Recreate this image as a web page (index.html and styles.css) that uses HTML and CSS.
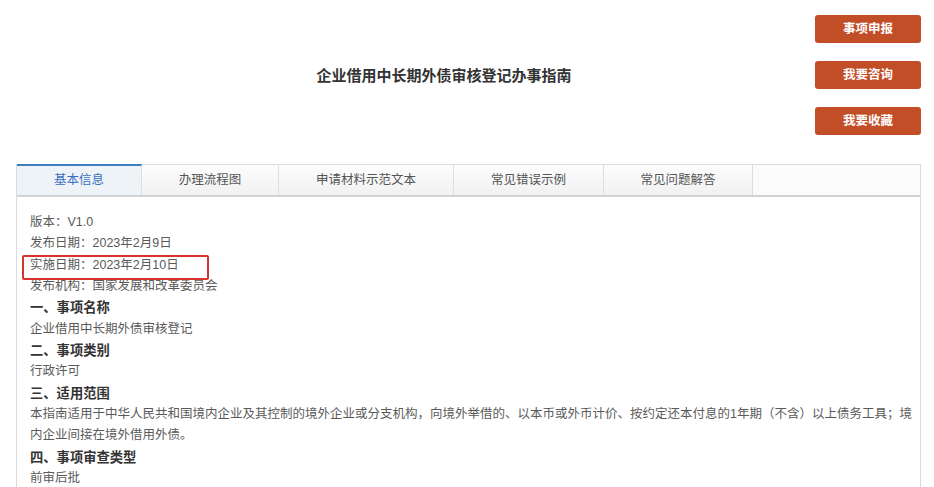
FILE: index.html
```html
<!DOCTYPE html>
<html lang="zh-CN">
<head>
<meta charset="utf-8">
<title>企业借用中长期外债审核登记办事指南</title>
<link rel="stylesheet" href="styles.css">
</head>
<body>
<div class="page">
  <header class="header">
    <h1 class="title">企业借用中长期外债审核登记办事指南</h1>
    <div class="actions">
      <a class="btn">事项申报</a>
      <a class="btn">我要咨询</a>
      <a class="btn">我要收藏</a>
    </div>
  </header>
  <section class="panel">
    <nav class="tabs">
      <div class="tab active t1">基本信息</div>
      <div class="tab t2">办理流程图</div>
      <div class="tab t3">申请材料示范文本</div>
      <div class="tab t4">常见错误示例</div>
      <div class="tab t5">常见问题解答</div>
      <div class="tab-rest"></div>
    </nav>
    <div class="content">
      <p class="line">版本：V1.0</p>
      <p class="line">发布日期：2023年2月9日</p>
      <p class="line marked">实施日期：2023年2月10日</p>
      <p class="line">发布机构：国家发展和改革委员会</p>
      <h2 class="heading">一、事项名称</h2>
      <p class="line">企业借用中长期外债审核登记</p>
      <h2 class="heading">二、事项类别</h2>
      <p class="line">行政许可</p>
      <h2 class="heading">三、适用范围</h2>
      <p class="line">本指南适用于中华人民共和国境内企业及其控制的境外企业或分支机构，向境外举借的、以本币或外币计价、按约定还本付息的1年期（不含）以上债务工具；境<br>内企业间接在境外借用外债。</p>
      <h2 class="heading">四、事项审查类型</h2>
      <p class="line">前审后批</p>
    </div>
  </section>
</div>
</body>
</html>
```
FILE: styles.css
```css
* { box-sizing: border-box; }
html, body {
  margin: 0;
  padding: 0;
  background: #fff;
  overflow: hidden;
}
body {
  font-family: "Liberation Sans", "Noto Sans CJK SC", sans-serif;
  color: #555;
}
.page {
  width: 934px;
  height: 487px;
  overflow: hidden;
  padding: 15px 13px 0 16px;
}
.header {
  display: flex;
  align-items: flex-start;
}
.title {
  flex: 1;
  margin: 0;
  padding: 51px 0 0 57px;
  text-align: center;
  font-size: 15px;
  line-height: 20px;
  font-weight: bold;
  color: #333;
}
.actions {
  display: flex;
  flex-direction: column;
  gap: 18px;
}
.btn {
  display: block;
  width: 106px;
  height: 28px;
  line-height: 28px;
  text-align: center;
  background: #c24e27;
  color: #fff;
  font-size: 12.5px;
  font-weight: bold;
  border-radius: 3px;
}
.panel {
  margin-top: 29px;
  width: 905px;
  border-left: 1px solid #dcdcdc;
  border-right: 1px solid #dcdcdc;
  height: 330px;
}
.tabs {
  display: flex;
  height: 33px;
  border-top: 1px solid #dcdcdc;
  border-bottom: 2px solid #d2d2d2;
  background: #f8f8f8;
}
.tab {
  height: 100%;
  line-height: 30px;
  text-align: center;
  font-size: 12.5px;
  color: #555;
  border-right: 1px solid #dedede;
  background: linear-gradient(#fdfdfd, #f1f1f1);
}
.tab.active {
  color: #3b6fbf;
  background: #eef3f7;
  border-top: 2px solid #3f7fbf;
  margin-top: -1px;
  height: calc(100% + 1px);
  line-height: 29px;
}
.t1 { width: 125px; }
.t2 { width: 137px; }
.t3 { width: 175px; }
.t4 { width: 150px; }
.t5 { width: 149px; }
.tab-rest { flex: 1; background: #fbfbfb; }
.content {
  padding: 15px 0 0 13px;
}
.line, .heading {
  margin: 0;
  line-height: 21.33px;
  white-space: nowrap;
}
.line {
  font-size: 12.5px;
  color: #5a5a5a;
}
.heading {
  font-size: 13.3px;
  font-weight: bold;
  color: #333;
}
.marked {
  position: relative;
}
.marked::after {
  content: "";
  position: absolute;
  left: -8px;
  top: 0;
  width: 183px;
  height: 21px;
  border: 2px solid #d8342b;
  border-radius: 2px;
}
```
